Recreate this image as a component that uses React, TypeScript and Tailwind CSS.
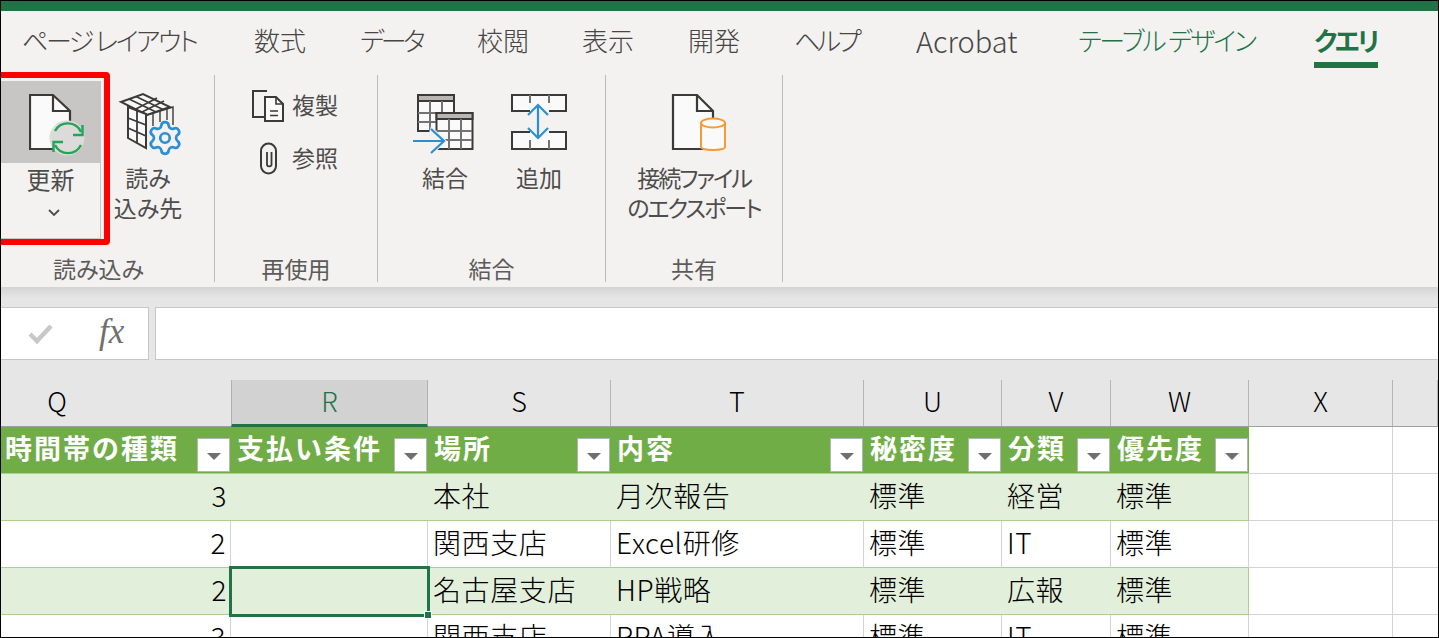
import React from "react";
import { Settings } from "lucide-react";

const ink = "#3b3a39";

const tabs: { t: string; w: string; c?: string }[] = [
  { t: "ページ レイアウト", w: "w-[232px] tracking-[-2.4px]" },
  { t: "数式", w: "w-[106px]" },
  { t: "データ", w: "w-[117px] tracking-[-3.5px]" },
  { t: "校閲", w: "w-[105px]" },
  { t: "表示", w: "w-[106px]" },
  { t: "開発", w: "w-[106px]" },
  { t: "ヘルプ", w: "w-[122px] tracking-[-3.5px]" },
  { t: "Acrobat", w: "w-[162px] text-[29px]" },
  { t: "テーブル デザイン", w: "w-[236px] tracking-[-2.1px]", c: "text-[#217346]" },
];

function UpdateIcon() {
  return (
    <svg width="56" height="66" viewBox="29 92 56 66" fill="none" className="block">
      <path d="M30 95H53L70 111V149H30Z" fill="#fafafa" stroke={ink} strokeWidth="2.2" />
      <path d="M53 95V111H70" stroke={ink} strokeWidth="2.2" />
      <circle cx="67" cy="138" r="17.5" fill="#dcdbd9" />
      <path d="M55 131A14.5 14.5 0 0 1 81 132" stroke="#21a558" strokeWidth="2.4" />
      <path d="M82.5 125V135H73" stroke="#21a558" strokeWidth="2.4" />
      <path d="M81 145A14.5 14.5 0 0 1 55 145" stroke="#21a558" strokeWidth="2.4" />
      <path d="M53.5 152V142H63" stroke="#21a558" strokeWidth="2.4" />
    </svg>
  );
}

function LoadToIcon() {
  return (
    <svg width="64" height="66" viewBox="118 92 64 66" fill="none" className="block">
      <g stroke={ink} strokeWidth="2">
        <path d="M121 102L143 94L170 107L147 115Z" fill="#f7f7f7" />
        <path d="M129 99L156 112M136 96.5L163 109.5M134 110L157 98M141 112.5L164 101" strokeWidth="1.6" />
        <path d="M128 107V138L146 148V114Z" fill="#fafafa" />
        <path d="M128 118L146 125M128 128L146 136M137 111V143" strokeWidth="1.8" />
        <path d="M147 115L173 107V125M153 113V126M160 111V122M167 109V120" strokeWidth="1.4" />
      </g>
    </svg>
  );
}

function DuplicateIcon() {
  return (
    <svg width="36" height="34" viewBox="250 88 36 34" fill="none" className="block">
      <path d="M267 90H253V116H264" stroke={ink} strokeWidth="2" />
      <path d="M265 96H276L283 103V120H265Z" fill="#fafafa" stroke={ink} strokeWidth="2" />
      <path d="M276 96V103H283M270 110H278M270 114.5H278" stroke={ink} strokeWidth="1.6" />
    </svg>
  );
}

function ClipIcon() {
  return (
    <svg width="36" height="34" viewBox="250 140 36 34" fill="none" className="block">
      <rect x="261" y="141.5" width="15" height="30" rx="7.5" stroke={ink} strokeWidth="2" />
      <path d="M267 150V163A2.5 2.5 0 0 0 271.5 163V150" stroke={ink} strokeWidth="1.8" />
    </svg>
  );
}

function MergeIcon() {
  return (
    <svg width="70" height="66" viewBox="410 92 70 66" fill="none" className="block">
      <rect x="418" y="95" width="36" height="36" fill="#fafafa" stroke={ink} strokeWidth="2" />
      <rect x="418" y="95" width="36" height="6" fill="#b8b7b5" stroke={ink} strokeWidth="2" />
      <path d="M430 101V131M442 101V131M418 113H454M418 122H454" stroke="#737373" strokeWidth="2" />
      <rect x="436.5" y="113" width="36" height="36" fill="#fafafa" stroke={ink} strokeWidth="2" />
      <rect x="436.5" y="113" width="36" height="6" fill="#b8b7b5" stroke={ink} strokeWidth="2" />
      <path d="M449 119V149M461 119V149M436 131H472M436 140H472" stroke="#737373" strokeWidth="2" />
      <path d="M431 126L447 141L431 156L428 145H411V137H428Z" fill="#f3f2f1" />
      <path d="M413 141H444M431 129L444 141L431 153" stroke="#2b8fd6" strokeWidth="2.2" />
    </svg>
  );
}

function AppendIcon() {
  return (
    <svg width="62" height="66" viewBox="508 92 62 66" fill="none" className="block">
      <path d="M530 111H512V95H566V111H549" fill="#fafafa" stroke={ink} strokeWidth="2" />
      <path d="M530 95V103M549 95V103" stroke="#737373" strokeWidth="2" />
      <path d="M530 132H512V149H566V132H549" fill="#fafafa" stroke={ink} strokeWidth="2" />
      <path d="M530 140V149M549 140V149" stroke="#737373" strokeWidth="2" />
      <path d="M538 105V138M528 115L538 105L548 115M528 128L538 138L548 128" stroke="#2b8fd6" strokeWidth="2.2" />
    </svg>
  );
}

function ExportIcon() {
  return (
    <svg width="60" height="66" viewBox="670 92 60 66" fill="none" className="block ml-[12px]">
      <path d="M673 95H697L713 111V149H673Z" fill="#fafafa" stroke={ink} strokeWidth="2.2" />
      <path d="M697 95V111H713" stroke={ink} strokeWidth="2.2" />
      <path d="M701 123V147C701 151 725 151 725 147V123Z" fill="#fafafa" stroke="#f7983a" strokeWidth="2" />
      <ellipse cx="713" cy="123" rx="12" ry="4.5" fill="#fafafa" stroke="#f7983a" strokeWidth="2" />
    </svg>
  );
}

function Group({ w, label, labelClass = "", children }: { w: string; label: string; labelClass?: string; children: React.ReactNode }) {
  return (
    <div className={`${w} h-[207px] mt-[5px] flex flex-col border-r border-[#bdbcba] shrink-0`}>
      <div className="flex-1 flex min-h-0">{children}</div>
      <div className={`h-[26px] leading-[24px] text-center text-[23px] text-[#5c5b5a] whitespace-nowrap ${labelClass}`}>{label}</div>
    </div>
  );
}

function Big({ w, icon, lines, textClass = "" }: { w: string; icon: React.ReactNode; lines: string[]; textClass?: string }) {
  return (
    <div className={`${w} pt-[17px] flex flex-col items-center shrink-0`}>
      {icon}
      <div className={`mt-[4px] text-[23px] leading-[30px] text-center text-[#4e4d4c] whitespace-nowrap ${textClass}`}>
        {lines.map((l) => (
          <div key={l}>{l}</div>
        ))}
      </div>
    </div>
  );
}

function Small({ icon, label }: { icon: React.ReactNode; label: string }) {
  return (
    <div className="h-[53px] flex items-center gap-[6px]">
      {icon}
      <span className="text-[23px] leading-[30px] text-[#4e4d4c] whitespace-nowrap -mt-[4px]">{label}</span>
    </div>
  );
}

const cols = "grid grid-cols-[230px_197px_183px_253px_138px_109px_138px_144px_1fr]";
const letters = ["Q", "R", "S", "T", "U", "V", "W", "X", ""];
const heads = ["時間帯の種類", "支払い条件", "場所", "内容", "秘密度", "分類", "優先度"];
const rows = [
  ["3", "", "本社", "月次報告", "標準", "経営", "標準"],
  ["2", "", "関西支店", "Excel研修", "標準", "IT", "標準"],
  ["2", "", "名古屋支店", "HP戦略", "標準", "広報", "標準"],
  ["3", "", "関西支店", "RPA導入", "標準", "IT", "標準"],
];

function FilterButton() {
  return (
    <div className="w-[33px] h-[34px] bg-white border border-[#b5b5b5] flex items-center justify-center shrink-0">
      <div className="w-0 h-0 border-l-[7px] border-r-[7px] border-t-[7px] border-l-transparent border-r-transparent border-t-[#6f6f6f] mt-[2px]" />
    </div>
  );
}

export default function App() {
  return (
    <div className="w-[1439px] h-[638px] border border-black overflow-hidden bg-white flex flex-col font-['Noto_Sans_CJK_JP','Noto_Sans',sans-serif] [font-feature-settings:'palt']">
      <div className="h-[10px] bg-[#217346] shrink-0" />
      {/* tabs */}
      <div className="h-[59px] bg-[#f3f2f1] flex pl-[21px] shrink-0 text-[#484644] text-[26px] font-light">
        {tabs.map((t) => (
          <div key={t.t} className={`${t.w} ${t.c ?? ""} pt-[10px] leading-[38px] whitespace-nowrap`}>
            {t.t}
          </div>
        ))}
        <div className="pt-[10px] leading-[38px] font-bold text-[#217346] flex flex-col items-start tracking-[-2.5px]">
          <span>クエリ</span>
          <span className="w-[64px] h-[6px] bg-[#217346] mt-[3px]" />
        </div>
      </div>
      {/* ribbon */}
      <div className="relative h-[217px] bg-[#f3f2f1] flex shrink-0">
        <Group w="w-[214px]" label="読み込み" labelClass="pr-[18px]">
          <div className="w-[100px] h-[158px] mt-[6px] flex flex-col border-r border-b border-[#c8c6c4] shrink-0">
            <div className="h-[82px] bg-[#c8c6c4] flex items-start justify-start pt-[11px] pl-[28px]">
              <UpdateIcon />
            </div>
            <div className="text-[24px] leading-[30px] text-center text-[#4e4d4c] pt-[1px]">更新</div>
            <div className="flex justify-center pt-[14px] pl-[7px]">
              <svg width="14" height="9" viewBox="0 0 14 9" fill="none">
                <path d="M2 2L7 7L12 2" stroke="#4e4d4c" strokeWidth="1.8" />
              </svg>
            </div>
          </div>
          <Big w="w-[94px]" icon={<div className="ml-[4px]"><LoadToIcon /></div>} lines={["読み", "込み先"]} />
        </Group>
        <Group w="w-[163px]" label="再使用">
          <div className="pl-[35px] pt-[4px]">
            <Small icon={<DuplicateIcon />} label="複製" />
            <Small icon={<ClipIcon />} label="参照" />
          </div>
        </Group>
        <Group w="w-[228px]" label="結合">
          <div className="pl-[20px] flex">
            <Big w="w-[94px]" icon={<MergeIcon />} lines={["結合"]} />
            <Big w="w-[94px]" icon={<AppendIcon />} lines={["追加"]} />
          </div>
        </Group>
        <Group w="w-[177px]" label="共有">
          <Big w="w-full" icon={<ExportIcon />} lines={["接続ファイル", "のエクスポート"]} textClass="tracking-[-2px]" />
        </Group>
        {/* overlays: gear badge and red annotation */}
        <Settings className="absolute left-[145px] top-[49px]" size={38} color="#2b8fd6" fill="#f3f2f1" strokeWidth={1.7} />
        <div className="absolute left-[-6px] top-[2px] w-[115px] h-[173px] border-[6px] border-[#ff0000] rounded-[4px]" />
      </div>
      {/* formula bar */}
      <div className="h-[93px] shrink-0 bg-gradient-to-b from-[#d4d4d4] via-[#e6e6e6] via-[12%] to-[#e6e6e6] pt-[20px] flex gap-[6px] items-start">
        <div className="w-[148px] h-[53px] bg-white border border-[#c6c6c6] border-l-0 flex items-center shrink-0">
          <svg width="30" height="24" viewBox="0 0 30 24" fill="none" className="ml-[25px]">
            <path d="M4 12L11 19L25 4" stroke="#c8c8c8" strokeWidth="4.5" />
          </svg>
          <span className="ml-[43px] text-[35px] leading-none italic text-[#6f6f6f] font-['Liberation_Serif',serif] mb-[4px]">fx</span>
        </div>
        <div className="flex-1 h-[53px] bg-white border border-[#c6c6c6] border-r-0" />
      </div>
      {/* column letters */}
      <div className={`${cols} h-[47px] shrink-0 bg-[#e6e6e6] border-b border-[#a0a0a0] text-[27px] font-light text-black`}>
        {letters.map((l, i) => (
          <div
            key={i}
            className={
              l === "R"
                ? "bg-[#d2d2d2] border-x border-[#b0b0b0] border-b-[3px] border-b-[#217346] text-[#217346] flex items-center justify-center h-[47px] -mb-[1px] pb-[2px]"
                : `flex items-center justify-center border-r border-[#b5b5b5] pb-[4px] ${l === "Q" ? "pr-[118px] border-r-0" : ""}`
            }
          >
            {l}
          </div>
        ))}
      </div>
      {/* table header */}
      <div className={`${cols} h-[47px] shrink-0 [font-feature-settings:normal]`}>
        {heads.map((h, i) => (
          <div key={h} className={`bg-[#70ad47] border-b border-[#a9d08e] flex items-end justify-between pr-[1px] pb-[1px] ${i === 0 ? "pl-[4px]" : "pl-[6px]"}`}>
            <span className="text-white font-bold text-[27px] leading-[42px] tracking-[2px] whitespace-nowrap self-start">{h}</span>
            <FilterButton />
          </div>
        ))}
        <div className="border-r border-b border-[#d4d4d4]" />
        <div className="border-b border-[#d4d4d4]" />
      </div>
      {/* rows */}
      {rows.map((r, ri) => {
        const band = ri % 2 === 0;
        return (
          <div key={ri} className={`${cols} h-[47px] shrink-0 [font-feature-settings:normal]`}>
            {r.map((c, ci) => (
              <div
                key={ci}
                className={`relative border-b border-[#a9d08e] text-[28px] font-light leading-[43px] text-black whitespace-nowrap tracking-[0.6px] ${
                  band ? "bg-[#e2efda]" : "bg-white border-r-[#d4d4d4] border-r"
                } ${ci === 6 ? "border-r border-r-[#a9d08e]" : ""} ${ci === 0 ? "text-right pr-[4px]" : "pl-[5px]"}`}
              >
                {c}
                {ri === 2 && ci === 1 && (
                  <div className="absolute left-[-2px] right-[-2px] top-[-2px] bottom-[-3px] border-[3px] border-[#217346] z-10">
                    <div className="absolute right-[-5px] bottom-[-5px] w-[8px] h-[8px] bg-[#217346] border border-white" />
                  </div>
                )}
              </div>
            ))}
            <div className="border-r border-b border-[#d4d4d4]" />
            <div className="border-b border-[#d4d4d4]" />
          </div>
        );
      })}
    </div>
  );
}
